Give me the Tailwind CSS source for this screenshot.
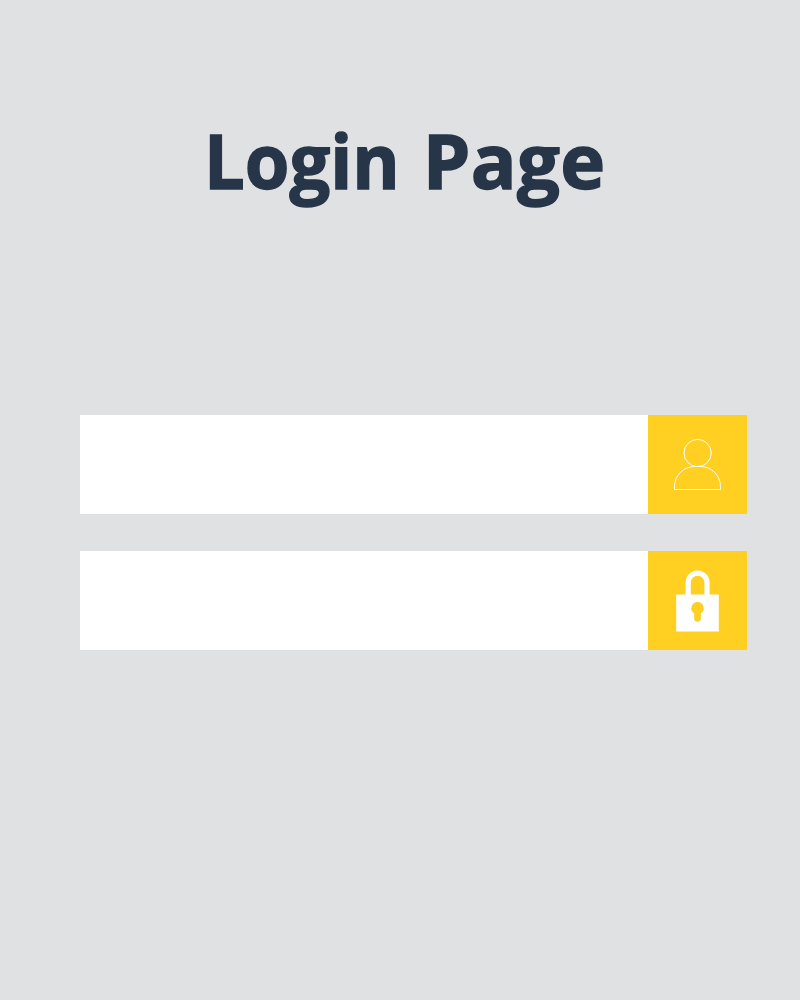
<!DOCTYPE html>
<html lang="en">
<head>
<meta charset="utf-8">
<title>Login Page</title>
<script src="https://cdn.jsdelivr.net/npm/@tailwindcss/browser@4"></script>
</head>
<body class="bg-[#dfe1e2]">
<main class="h-[1000px] w-[800px] overflow-hidden pl-20 pt-[107px]">
  <h1 class="ml-[124px] h-[308px] whitespace-nowrap font-['Open_Sans',sans-serif] text-[76px] font-bold leading-[105px] text-[#273549] [-webkit-text-stroke:1.4px_#273549]"><span class="inline-block w-[199px] origin-left scale-x-[0.95]">Login</span> <span class="inline-block tracking-[0.3px]">Page</span></h1>
  <form class="flex w-[667px] flex-col gap-[37px]">
    <div class="flex h-[99px]">
      <input type="text" aria-label="Username" class="min-w-0 flex-1 bg-white px-6 text-3xl outline-none">
      <div class="size-[99px] bg-[#ffcf22]">
        <svg class="size-[99px]" viewBox="0 0 99 99" fill="none" stroke="#fff" stroke-width="1">
          <circle cx="49.6" cy="38" r="13.6"/>
          <path d="M26.5 74.5V71.5A20 20 0 0 1 46.5 51.5H52.5A20 20 0 0 1 72.5 71.5V74.5Z"/>
        </svg>
      </div>
    </div>
    <div class="flex h-[99px]">
      <input type="password" aria-label="Password" class="min-w-0 flex-1 bg-white px-6 text-3xl outline-none">
      <div class="size-[99px] bg-[#ffcf22]">
        <svg class="size-[99px]" viewBox="0 0 99 99">
          <path d="M40.2 45V31.5a9.4 9.4 0 0 1 18.8 0V45" fill="none" stroke="#fff" stroke-width="5.2"/>
          <path d="M28.2 43.5H70.8V80.5H28.2Z" fill="#fff"/>
          <path d="M49.5 51a6.2 6.2 0 0 1 3.3 11.4V67.5a3.3 3.3 0 0 1-6.6 0V62.4A6.2 6.2 0 0 1 49.5 51Z" fill="#ffcf22"/>
        </svg>
      </div>
    </div>
  </form>
</main>
</body>
</html>
